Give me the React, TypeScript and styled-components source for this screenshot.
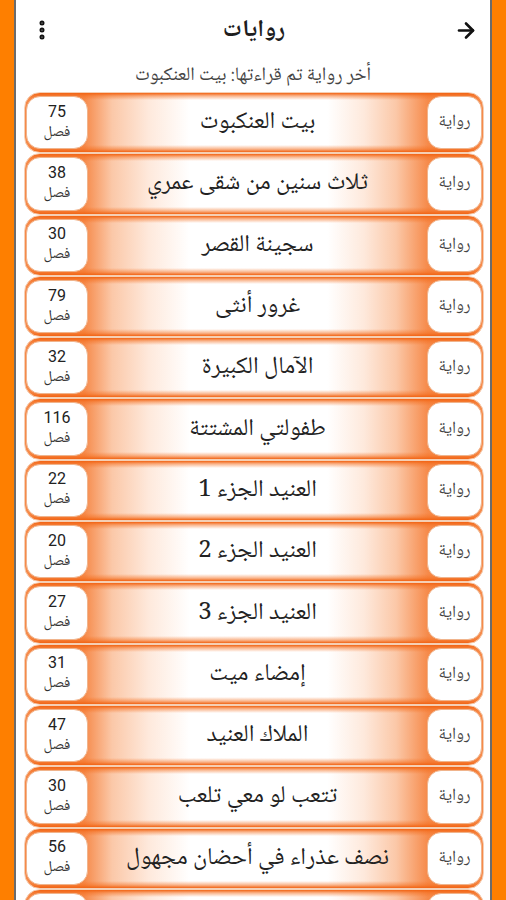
import React from "react";
import styled, { createGlobalStyle } from "styled-components";
import { ArrowRight, MoreVertical } from "lucide-react";

const GlobalStyle = createGlobalStyle`
  html, body { margin: 0; padding: 0; background: #fe7f00; }
  body { font-family: "Noto Naskh Arabic", "Noto Sans Arabic", "DejaVu Sans", sans-serif; }
`;

const Frame = styled.div`
  margin: 0 14px;
  min-height: 900px;
  background: #ffffff;
  border-left: 2px solid #6b6b6b;
  border-right: 2px solid #6b6b6b;
  direction: rtl;
`;

const Header = styled.header`
  height: 60px;
  display: flex;
  align-items: center;
  justify-content: space-between;
  padding: 0 12px 0 14px;
`;

const IconButton = styled.div`
  width: 24px;
  height: 24px;
  display: flex;
  align-items: center;
  justify-content: center;
  color: #111;
`;

const Title = styled.h1`
  margin: 0;
  font-size: 24px;
  font-weight: bold;
  color: #1e1e1e;
`;

const Subtitle = styled.div`
  height: 32px;
  display: flex;
  align-items: center;
  justify-content: center;
  font-size: 19px;
  color: #444;
`;

const List = styled.div`
  display: flex;
  flex-direction: column;
  padding: 0 6px 0 8px;
`;

const Card = styled.div`
  height: 61.3px;
  box-sizing: border-box;
  display: flex;
  align-items: stretch;
  padding: 3px 1px;
  border-radius: 16px;
  border: 1px solid #f5cfb4;
  background:
    linear-gradient(to bottom, #f26414 0px, rgba(244, 110, 30, 0.5) 3px, rgba(255, 255, 255, 0) 7px, rgba(255, 255, 255, 0) calc(100% - 7px), rgba(244, 110, 30, 0.5) calc(100% - 3px), #f26414 100%),
    linear-gradient(to right, #f68a4a 0%, #f68a4a 13%, #fbc8a8 19%, #fee9dc 27%, #ffffff 36%, #ffffff 66%, #fee9dc 74%, #fbc8a8 81%, #f68a4a 88%, #f68a4a 100%);
`;

const Pill = styled.div<{ $w: number }>`
  width: ${(p) => p.$w}px;
  flex: none;
  box-sizing: border-box;
  background: #ffffff;
  border: 1px solid #f0b48c;
  border-radius: 14px;
  display: flex;
  flex-direction: column;
  align-items: center;
  justify-content: center;
  color: #333;
`;

const Kind = styled.span`
  font-size: 17px;
  color: #444;
`;

const Count = styled.span`
  font-family: Roboto, "Liberation Sans", sans-serif;
  font-size: 16px;
  line-height: 18px;
  color: #222;
`;

const Unit = styled.span`
  font-size: 15px;
  line-height: 20px;
  margin-top: 2px;
  color: #333;
`;

const Name = styled.div`
  flex: 1;
  display: flex;
  align-items: center;
  justify-content: center;
  font-size: 24px;
  color: #222;
`;

const novels: [number, string][] = [
  [75, "بيت العنكبوت"],
  [38, "ثلاث سنين من شقى عمري"],
  [30, "سجينة القصر"],
  [79, "غرور أنثى"],
  [32, "الآمال الكبيرة"],
  [116, "طفولتي المشتتة"],
  [22, "العنيد الجزء 1"],
  [20, "العنيد الجزء 2"],
  [27, "العنيد الجزء 3"],
  [31, "إمضاء ميت"],
  [47, "الملاك العنيد"],
  [30, "تتعب لو معي تلعب"],
  [56, "نصف عذراء في أحضان مجهول"],
  [40, "حب في الظلام"],
];

export default function App() {
  return (
    <>
      <GlobalStyle />
      <Frame>
        <Header>
          <IconButton>
            <ArrowRight size={25} strokeWidth={2.6} />
          </IconButton>
          <Title>روايات</Title>
          <IconButton>
            <MoreVertical size={24} strokeWidth={3} />
          </IconButton>
        </Header>
        <Subtitle>أخر رواية تم قراءتها: بيت العنكبوت</Subtitle>
        <List>
          {novels.map(([n, t], i) => (
            <Card key={i}>
              <Pill $w={55}>
                <Kind>رواية</Kind>
              </Pill>
              <Name>{t}</Name>
              <Pill $w={62}>
                <Count>{n}</Count>
                <Unit>فصل</Unit>
              </Pill>
            </Card>
          ))}
        </List>
      </Frame>
    </>
  );
}
